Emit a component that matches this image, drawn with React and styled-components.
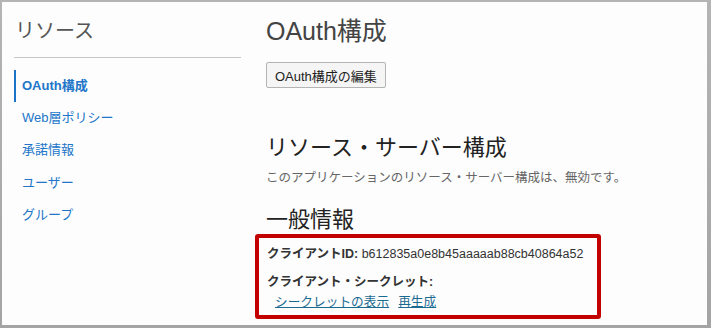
import React from "react";
import styled, { createGlobalStyle } from "styled-components";

const Global = createGlobalStyle`
  html, body { margin: 0; padding: 0; background: #a8a8a8; }
  body { font-family: "Liberation Sans", "Noto Sans CJK JP", sans-serif; }
  * { box-sizing: border-box; }
`;

const Frame = styled.div`
  width: 711px;
  height: 328px;
  padding: 2px 4px 3px 2px;
  background: linear-gradient(#b4b4b4, #a4a4a4);
`;

const Page = styled.div`
  height: 100%;
  background: #fdfdfd;
  display: grid;
  grid-template-columns: 227px 1fr;
  column-gap: 25px;
  padding-left: 12px;
  overflow: hidden;
`;

const Sidebar = styled.aside`
  display: flex;
  flex-direction: column;
  padding-top: 17px;
`;

const SideTitle = styled.div`
  font-size: 20px;
  line-height: 24px;
  color: #555;
  padding-left: 1px;
`;

const Divider = styled.hr`
  border: 0;
  border-top: 1px solid #c6c6c6;
  margin: 14px 0 12px;
`;

const Nav = styled.nav`
  display: flex;
  flex-direction: column;
`;

const NavItem = styled.a`
  display: flex;
  align-items: center;
  height: 32.4px;
  padding-left: 6px;
  border-left: 2px solid ${(p) => (p.$active ? "#1a73c8" : "transparent")};
  font-size: 13px;
  font-weight: ${(p) => (p.$active ? 700 : 400)};
  color: #2176c9;
  text-decoration: none;
  padding-bottom: 4px;
`;

const Main = styled.main`
  display: flex;
  flex-direction: column;
  align-items: flex-start;
  padding-top: 14px;
`;

const Title = styled.h1`
  margin: 0;
  font-size: 25px;
  line-height: 30px;
  font-weight: 400;
  color: #444;
`;

const Button = styled.button`
  margin-top: 16px;
  height: 26px;
  padding: 0 8px;
  font-family: inherit;
  font-size: 13px;
  color: #222;
  background: #f5f5f5;
  border: 1px solid #b4b4b4;
  border-radius: 2px;
`;

const Heading = styled.h2`
  margin: ${(p) => p.$mt}px 0 0;
  font-size: 22px;
  line-height: 28px;
  font-weight: 400;
  color: #222;
`;

const Desc = styled.p`
  margin: 7px 0 0;
  font-size: 12.5px;
  line-height: 18px;
  color: #666;
`;

const Highlight = styled.div`
  margin: 0 0 0 -11px;
  width: 346px;
  border: 4px solid #c20000;
  border-radius: 3px;
  padding: 7px 8px 4px;
  display: flex;
  flex-direction: column;
`;

const Row = styled.div`
  font-size: 12.5px;
  line-height: 18px;
  color: #333;
  white-space: nowrap;
  margin-top: ${(p) => p.$mt || 0}px;
`;

const Label = styled.span`
  font-weight: 700;
`;

const Links = styled.div`
  display: flex;
  gap: 9px;
  padding-left: 8px;
  margin-top: 2px;
  font-size: 12.7px;
  line-height: 18px;
`;

const Link = styled.a`
  color: #1b6a92;
  text-decoration: underline;
`;

export default function App() {
  return (
    <>
      <Global />
      <Frame>
        <Page>
          <Sidebar>
            <SideTitle>リソース</SideTitle>
            <Divider />
            <Nav>
              <NavItem $active>OAuth構成</NavItem>
              <NavItem>Web層ポリシー</NavItem>
              <NavItem>承諾情報</NavItem>
              <NavItem>ユーザー</NavItem>
              <NavItem>グループ</NavItem>
            </Nav>
          </Sidebar>
          <Main>
            <Title>OAuth構成</Title>
            <Button>OAuth構成の編集</Button>
            <Heading $mt={46}>リソース・サーバー構成</Heading>
            <Desc>このアプリケーションのリソース・サーバー構成は、無効です。</Desc>
            <Heading $mt={19}>一般情報</Heading>
            <Highlight>
              <Row>
                <Label>クライアントID:</Label> b612835a0e8b45aaaaab88cb40864a52
              </Row>
              <Row $mt={10}>
                <Label>クライアント・シークレット:</Label>
              </Row>
              <Links>
                <Link>シークレットの表示</Link>
                <Link>再生成</Link>
              </Links>
            </Highlight>
          </Main>
        </Page>
      </Frame>
    </>
  );
}
